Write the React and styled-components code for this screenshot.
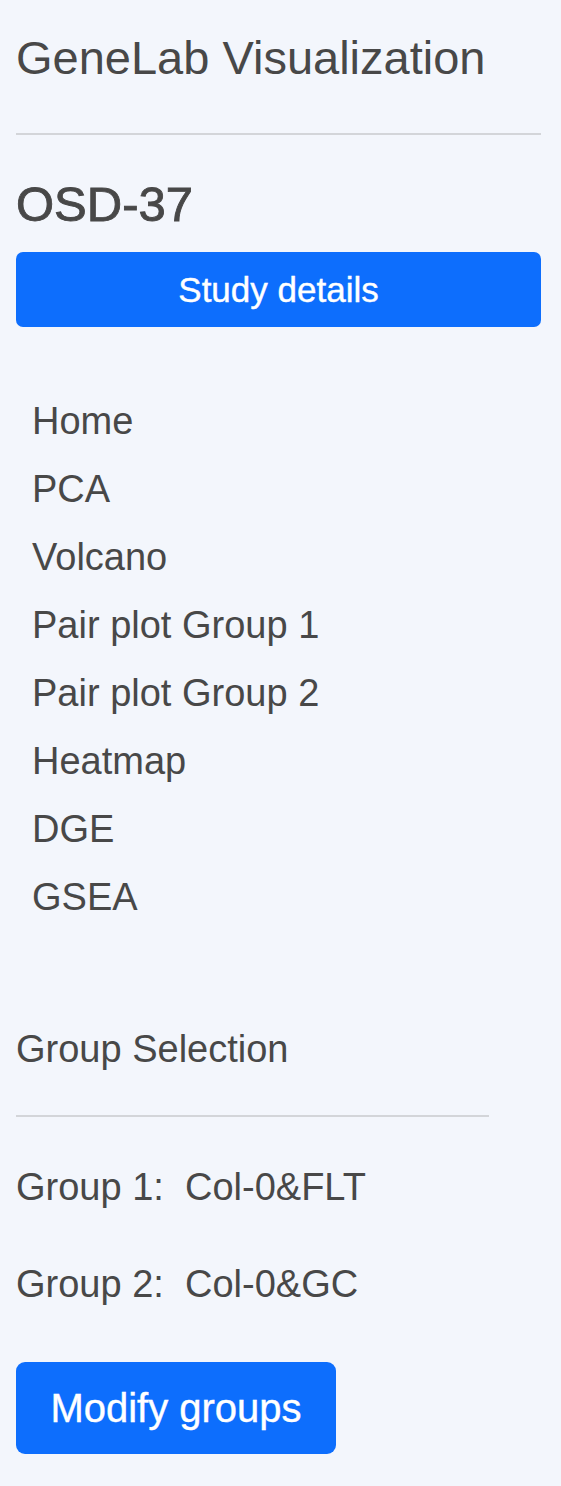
import React from "react";
import styled, { createGlobalStyle } from "styled-components";

const GlobalStyle = createGlobalStyle`
  html, body {
    margin: 0;
    padding: 0;
    background: #f3f6fc;
  }
  body {
    font-family: "Liberation Sans", Arial, sans-serif;
    color: #484848;
  }
`;

const Sidebar = styled.aside`
  width: 525px;
  padding: 30px 0 31px 16px;
  display: flex;
  flex-direction: column;
`;

const Title = styled.h2`
  margin: 0;
  font-size: 47px;
  line-height: 56px;
  font-weight: 400;
`;

const Divider = styled.hr`
  margin: ${(p) => p.$top}px 0 0 0;
  width: ${(p) => p.$width}px;
  border: 0;
  border-top: 2px solid #d3d5d9;
  height: 0;
`;

const StudyId = styled.h3`
  margin: 41px 0 0 0;
  font-size: 49px;
  line-height: 56px;
  font-weight: 400;
  -webkit-text-stroke: 0.9px #484848;
`;

const Button = styled.button`
  font-family: "Liberation Sans", Arial, sans-serif;
  background: #0d6efd;
  color: #fff;
  border: 0;
  border-radius: ${(p) => (p.$large ? 9 : 7)}px;
  font-size: ${(p) => (p.$large ? 40 : 35)}px;
  font-weight: 400;
  -webkit-text-stroke: 0.4px #fff;
  height: ${(p) => (p.$large ? 92 : 75)}px;
  width: ${(p) => (p.$large ? "320px" : "100%")};
  padding: 0;
  margin-top: ${(p) => p.$top}px;
  align-self: flex-start;
`;

const NavList = styled.ul`
  list-style: none;
  margin: 60px 0 0 0;
  padding: 0 0 0 16px;
`;

const NavItem = styled.li`
  font-size: 38px;
  line-height: 68px;
`;

const SectionLabel = styled.div`
  margin-top: ${(p) => p.$top}px;
  font-size: 38px;
  line-height: 48px;
  white-space: pre;
`;

const navItems = [
  "Home",
  "PCA",
  "Volcano",
  "Pair plot Group 1",
  "Pair plot Group 2",
  "Heatmap",
  "DGE",
  "GSEA",
];

export default function App() {
  return (
    <>
      <GlobalStyle />
      <Sidebar>
        <Title>GeneLab Visualization</Title>
        <Divider $top={47} $width={525} />
        <StudyId>OSD-37</StudyId>
        <Button $top={20}>Study details</Button>
        <NavList>
          {navItems.map((item) => (
            <NavItem key={item}>{item}</NavItem>
          ))}
        </NavList>
        <SectionLabel $top={94}>Group Selection</SectionLabel>
        <Divider $top={42} $width={473} />
        <SectionLabel $top={46}>Group 1:  Col-0&FLT</SectionLabel>
        <SectionLabel $top={49}>Group 2:  Col-0&GC</SectionLabel>
        <Button $large $top={54}>Modify groups</Button>
      </Sidebar>
    </>
  );
}
